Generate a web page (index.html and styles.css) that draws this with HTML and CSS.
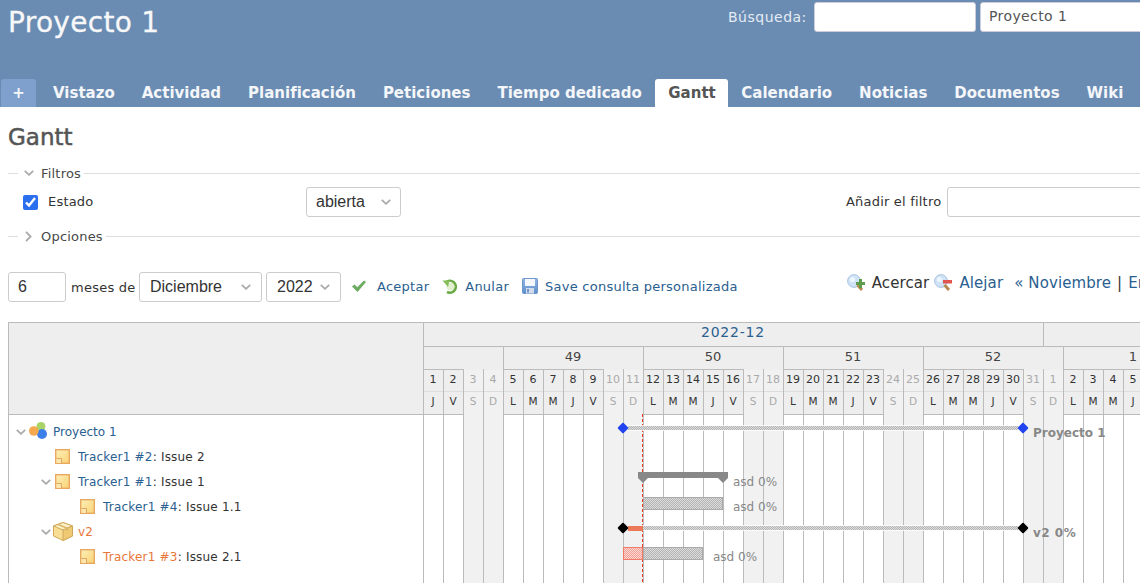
FILE: index.html
```html
<!DOCTYPE html>
<html lang="es">
<head>
	<meta charset="UTF-8">
	<title>Gantt - Proyecto 1</title>
	<link rel="stylesheet" href="styles.css">
</head>
<body>
<svg class="defs" width="0" height="0">
	<defs>
		<linearGradient id="g-ticket" x1="0" y1="0" x2="1" y2="1">
			<stop offset="0" stop-color="#fdf0b8"/>
			<stop offset="1" stop-color="#f9d276"/>
		</linearGradient>
		<linearGradient id="g-save" x1="0" y1="0" x2="0" y2="1">
			<stop offset="0" stop-color="#8fb6e4"/>
			<stop offset="1" stop-color="#5f8fcc"/>
		</linearGradient>
	</defs>
	<symbol id="i-down" viewBox="0 0 10 6"><path d="M.8.8 5 4.8 9.2.8" fill="none" stroke="#aaa" stroke-width="1.8"/></symbol>
	<symbol id="i-right" viewBox="0 0 7 11"><path d="M1 .8 5.6 5.5 1 10.2" fill="none" stroke="#aaa" stroke-width="1.8"/></symbol>
	<symbol id="i-project" viewBox="0 0 18 17">
		<circle cx="12" cy="4.500" r="4.500" fill="#a8d468"/>
		<circle cx="13" cy="12" r="5" fill="#3d7fe8"/>
		<circle cx="4.800" cy="9" r="4.800" fill="#f5a94e"/>
	</symbol>
	<symbol id="i-ticket" viewBox="0 0 15 15">
		<rect x=".7" y=".7" width="13.600" height="13.600" fill="url(#g-ticket)" stroke="#e8a860" stroke-width="1.400"/>
		<path d="M1.500 10H6V14H1.500Z" fill="#fbe7ae"/>
		<path d="M1.500 9.500H6.500V14" fill="none" stroke="#dca05a" stroke-width=".9"/>
	</symbol>
	<symbol id="i-box" viewBox="0 0 20 19">
		<path d="M10 .5 19.500 4V14L10 18.500.5 14V4Z" fill="#f7de94" stroke="#cfa85a"/>
		<path d="M.5 4 10 8 19.500 4 10 .5Z" fill="#fcf1c8" stroke="#cfa85a"/>
		<path d="M10 8V18.500L19.500 14V4Z" fill="#f0c973" stroke="#cfa85a"/>
		<path d="M5 2.500 14.500 6.200V9" fill="none" stroke="#d9b66a" stroke-width="1.500"/>
	</symbol>
	<symbol id="i-check" viewBox="0 0 16 14"><path d="M1 7.500 3.500 5.500 6.300 8.300 13 1.500 15 3 6.500 13Z" fill="#6cab60"/></symbol>
	<symbol id="i-undo" viewBox="0 0 16 16">
		<circle cx="8.500" cy="8.500" r="4" fill="#e2efcf"/>
		<path d="M3.500 4.500A6 6 0 1 1 5 14" fill="none" stroke="#6dab45" stroke-width="2.600"/>
		<path d="M.5 2.500 7.500 2.500 6 9Z" fill="#86bf58"/>
	</symbol>
	<symbol id="i-save" viewBox="0 0 16 16">
		<rect x=".5" y=".5" width="15" height="15" rx="1" fill="url(#g-save)" stroke="#6f97c9"/>
		<rect x="3" y="1" width="10" height="7" fill="#f4f7fb"/>
		<rect x="4" y="10" width="8" height="5.500" fill="#d3dcea"/>
		<rect x="5" y="11" width="2" height="3.500" fill="#6f97c9"/>
	</symbol>
	<symbol id="i-zoomin" viewBox="0 0 18 18">
		<circle cx="7" cy="7" r="6.400" fill="#cfe2f6" stroke="#a9c4e2"/>
		<circle cx="5.500" cy="5.500" r="2.600" fill="#eef6fd"/>
		<path d="M10.500 11 15 16" stroke="#b88a52" stroke-width="3"/>
		<path d="M9 8H12V5H15V8H18V11H15V14H12V11H9Z" fill="#5c9c4a"/>
	</symbol>
	<symbol id="i-zoomout" viewBox="0 0 18 18">
		<circle cx="7" cy="7" r="6.400" fill="#cfe2f6" stroke="#a9c4e2"/>
		<circle cx="5.500" cy="5.500" r="2.600" fill="#eef6fd"/>
		<path d="M10.500 11 15 16" stroke="#b88a52" stroke-width="3"/>
		<rect x="9" y="6" width="9" height="3.500" fill="#e0564e"/>
	</symbol>
</svg>

<div class="page">
	<header class="top">
		<div class="top-row">
			<h1>Proyecto 1</h1>
			<div class="quick">
				<label>Búsqueda:</label>
				<input class="quick-q" type="text">
				<div class="quick-jump">Proyecto 1</div>
			</div>
		</div>
		<nav class="tabs">
			<a class="tab plus">+</a>
			<a class="tab">Vistazo</a>
			<a class="tab">Actividad</a>
			<a class="tab">Planificación</a>
			<a class="tab">Peticiones</a>
			<a class="tab">Tiempo dedicado</a>
			<a class="tab active">Gantt</a>
			<a class="tab">Calendario</a>
			<a class="tab">Noticias</a>
			<a class="tab">Documentos</a>
			<a class="tab">Wiki</a>
		</nav>
	</header>

	<main class="content">
		<h2>Gantt</h2>

		<div class="legend filters-legend">
			<svg class="ico-down"><use href="#i-down"/></svg>
			<span>Filtros</span>
		</div>
		<div class="filter-row">
			<input class="check" type="checkbox" checked>
			<span class="filter-name">Estado</span>
			<div class="select sel-status"><span>abierta</span><svg class="ico-down"><use href="#i-down"/></svg></div>
			<span class="add-label">Añadir el filtro</span>
			<input class="add-input" type="text">
		</div>
		<div class="legend options-legend">
			<svg class="ico-right"><use href="#i-right"/></svg>
			<span>Opciones</span>
		</div>

		<div class="toolbar">
			<input class="months" type="text" value="6">
			<span class="months-label">meses de</span>
			<div class="select sel-month"><span>Diciembre</span><svg class="ico-down"><use href="#i-down"/></svg></div>
			<div class="select sel-year"><span>2022</span><svg class="ico-down"><use href="#i-down"/></svg></div>
			<a class="action act-ok"><svg class="ico-check"><use href="#i-check"/></svg>Aceptar</a>
			<a class="action act-undo"><svg class="ico-16"><use href="#i-undo"/></svg>Anular</a>
			<a class="action act-save"><svg class="ico-16"><use href="#i-save"/></svg>Save consulta personalizada</a>
			<div class="pager">
				<svg class="ico-18"><use href="#i-zoomin"/></svg>
				<span class="zoom-off">Acercar</span>
				<svg class="ico-18"><use href="#i-zoomout"/></svg>
				<a class="zoom-on">Alejar</a>
				<a class="prev">« Noviembre</a>
				<span class="sep">|</span>
				<a>Enero »</a>
			</div>
		</div>

		<section class="gantt">
			<div class="subjects">
				<div class="subjects-head"></div>
				<div class="row"><svg class="ico-down tree lvl0"><use href="#i-down"/></svg><svg class="ico-project"><use href="#i-project"/></svg><a>Proyecto 1</a></div>
				<div class="row lvl1"><svg class="ico-ticket"><use href="#i-ticket"/></svg><a>Tracker1 #2</a>: Issue 2</div>
				<div class="row"><svg class="ico-down tree lvl1b"><use href="#i-down"/></svg><svg class="ico-ticket"><use href="#i-ticket"/></svg><a>Tracker1 #1</a>: Issue 1</div>
				<div class="row lvl2"><svg class="ico-ticket"><use href="#i-ticket"/></svg><a>Tracker1 #4</a>: Issue 1.1</div>
				<div class="row"><svg class="ico-down tree lvl1b"><use href="#i-down"/></svg><svg class="ico-box"><use href="#i-box"/></svg><a class="late">v2</a></div>
				<div class="row lvl2"><svg class="ico-ticket"><use href="#i-ticket"/></svg><a class="late">Tracker1 #3</a>: Issue 2.1</div>
			</div>

			<div class="chart">
				<div class="months-row">
					<div class="month dec"><a>2022-12</a></div>
					<div class="month jan"></div>
				</div>
				<div class="weeks-row">
					<div class="week w0"></div>
					<div class="week w7">49</div>
					<div class="week w7">50</div>
					<div class="week w7">51</div>
					<div class="week w7">52</div>
					<div class="week w7">1</div>
				</div>
				<div class="days">
					<div class="day"><b>1</b><i>J</i></div>
					<div class="day"><b>2</b><i>V</i></div>
					<div class="day off"><b>3</b><i>S</i></div>
					<div class="day off"><b>4</b><i>D</i></div>
					<div class="day"><b>5</b><i>L</i></div>
					<div class="day"><b>6</b><i>M</i></div>
					<div class="day"><b>7</b><i>M</i></div>
					<div class="day"><b>8</b><i>J</i></div>
					<div class="day"><b>9</b><i>V</i></div>
					<div class="day off"><b>10</b><i>S</i></div>
					<div class="day off"><b>11</b><i>D</i></div>
					<div class="day"><b>12</b><i>L</i></div>
					<div class="day"><b>13</b><i>M</i></div>
					<div class="day"><b>14</b><i>M</i></div>
					<div class="day"><b>15</b><i>J</i></div>
					<div class="day"><b>16</b><i>V</i></div>
					<div class="day off"><b>17</b><i>S</i></div>
					<div class="day off"><b>18</b><i>D</i></div>
					<div class="day"><b>19</b><i>L</i></div>
					<div class="day"><b>20</b><i>M</i></div>
					<div class="day"><b>21</b><i>M</i></div>
					<div class="day"><b>22</b><i>J</i></div>
					<div class="day"><b>23</b><i>V</i></div>
					<div class="day off"><b>24</b><i>S</i></div>
					<div class="day off"><b>25</b><i>D</i></div>
					<div class="day"><b>26</b><i>L</i></div>
					<div class="day"><b>27</b><i>M</i></div>
					<div class="day"><b>28</b><i>M</i></div>
					<div class="day"><b>29</b><i>J</i></div>
					<div class="day"><b>30</b><i>V</i></div>
					<div class="day off"><b>31</b><i>S</i></div>
					<div class="day off"><b>1</b><i>D</i></div>
					<div class="day"><b>2</b><i>L</i></div>
					<div class="day"><b>3</b><i>M</i></div>
					<div class="day"><b>4</b><i>M</i></div>
					<div class="day"><b>5</b><i>J</i></div>
					<div class="day"><b>6</b><i>V</i></div>
				</div>

				<div class="today"></div>

				<div class="line line-project"></div>
				<div class="marker blue m-start-1"></div>
				<div class="marker blue m-end-1"></div>
				<span class="caption bold cap-project">Proyecto 1</span>

				<div class="parent"></div>
				<div class="parent-end pe-left"></div>
				<div class="parent-end pe-right"></div>
				<span class="caption cap-issue1">asd 0%</span>

				<div class="bar bar-issue4"></div>
				<span class="caption cap-issue4">asd 0%</span>

				<div class="line line-v2"></div>
				<div class="line-late"></div>
				<div class="marker black m-start-2"></div>
				<div class="marker black m-end-2"></div>
				<span class="caption bold cap-v2">v2 0%</span>

				<div class="bar-late"></div>
				<div class="bar bar-issue3"></div>
				<span class="caption cap-issue3">asd 0%</span>
			</div>
		</section>
	</main>
</div>
</body>
</html>
```

FILE: styles.css
```css
*{
	margin:0;
	padding:0;
	box-sizing:border-box;
}
html,body{
	width:100%;
	height:100%;
	overflow:hidden;
	background:#fff;
}
body{
	font-family:"DejaVu Sans",Verdana,sans-serif;
	font-size:12px;
	color:#333;
}
a{
	color:#2a6090;
}
.defs{
	position:absolute;
}
.page{
	width:1400px;
}

/* header */
.top{
	height:107px;
	background:#6a8cb3;
	display:flex;
	flex-direction:column;
}
.top-row{
	height:79px;
	display:flex;
	align-items:flex-start;
}
h1{
	width:728px;
	padding:5px 0 0 8px;
	font-size:28px;
	letter-spacing:.3px;
	line-height:36px;
	font-weight:normal;
	color:#f8f8f8;
	-webkit-text-stroke:.3px #f8f8f8;
}
.quick{
	display:flex;
	align-items:center;
	padding-top:2px;
	height:32px;
	font-size:14px;
	color:#e4ebf3;
}
.quick label{
	width:86px;
	letter-spacing:.5px;
}
.quick-q{
	width:162px;
	height:30px;
	border:1px solid #ccd;
	border-radius:3px;
	background:#fff;
}
.quick-jump{
	width:300px;
	height:30px;
	margin-left:4px;
	padding-left:8px;
	line-height:26px;
	background:#fff;
	border:1px solid #ccd;
	border-radius:3px;
	letter-spacing:.4px;
	color:#555;
}
.tabs{
	height:28px;
	display:flex;
	padding-left:1px;
	font-size:15px;
	font-weight:bold;
}
.tab{
	padding:0 13.500px;
	line-height:28px;
	color:#f4f6f9;
	border-radius:3px 3px 0 0;
	white-space:nowrap;
}
.tab.plus{
	width:35px;
	padding:0;
	text-align:center;
	background:#7f9fcd;
	margin-right:3.500px;
}
.tab.active{
	padding:0 12px 0 13px;
	background:#fff;
	color:#555;
}

/* content */
.content{
	padding:0 0 0 8px;
}
h2{
	height:58px;
	padding-top:14px;
	font-size:23px;
	line-height:32px;
	font-weight:normal;
	color:#555;
	-webkit-text-stroke:.5px #555;
}
.legend{
	height:16px;
	display:flex;
	align-items:center;
	font-size:13px;
	letter-spacing:.2px;
	color:#484848;
}
.legend::before{
	content:'';
	width:10px;
	height:1px;
	background:#ddd;
}
.legend::after{
	content:'';
	flex:1;
	height:1px;
	margin-left:3px;
	background:#ddd;
}
.ico-down{
	width:10px;
	height:6px;
	flex:none;
}
.ico-right{
	width:7px;
	height:11px;
	flex:none;
}
.filters-legend .ico-down{
	margin:0 7px 0 6px;
}
.options-legend .ico-right{
	margin:0 9px 0 7px;
}
.filter-row{
	height:47px;
	display:flex;
	align-items:center;
	padding-bottom:5px;
	font-size:13px;
	letter-spacing:.2px;
}
.check{
	width:15px;
	height:15px;
	margin-left:15px;
	accent-color:#2b6fef;
}
.filter-name{
	width:258px;
	margin-left:10px;
	margin-top:-2px;
}
.select{
	height:30px;
	display:flex;
	align-items:center;
	justify-content:space-between;
	border:1px solid #ccc;
	border-radius:3px;
	background:#fff;
	font-family:"Liberation Sans",Arial,sans-serif;
	font-size:16px;
	letter-spacing:0;
	color:#333;
	flex:none;
}
.sel-status{
	width:95px;
	padding:0 9px;
}
.add-label{
	width:96px;
	margin-left:445px;
	margin-top:-2px;
	white-space:nowrap;
}
.add-input{
	width:300px;
	height:30px;
	margin-left:5px;
	border:1px solid #ccc;
	border-radius:3px;
}
.toolbar{
	height:30px;
	margin-top:28px;
	display:flex;
	align-items:center;
	font-size:13px;
	letter-spacing:.25px;
	white-space:nowrap;
}
.months{
	width:58px;
	height:30px;
	padding-left:9px;
	border:1px solid #ccc;
	border-radius:3px;
	font-family:"Liberation Sans",Arial,sans-serif;
	font-size:16px;
	color:#333;
}
.months-label{
	width:64px;
	margin:0 4px 0 5px;
}
.sel-month{
	width:123px;
	padding:0 10px;
}
.sel-year{
	width:75px;
	margin-left:4px;
	padding:0 10px;
}
.action{
	display:flex;
	align-items:center;
	margin-top:-2px;
}
.ico-check{
	width:16px;
	height:14px;
	margin-right:10px;
}
.ico-16{
	width:16px;
	height:16px;
	margin-right:7px;
}
.act-ok{
	margin-left:10px;
}
.act-undo{
	margin-left:13px;
}
.act-save{
	margin-left:13px;
}
.pager{
	display:flex;
	align-items:center;
	margin-left:109px;
	margin-top:-8px;
	font-size:15px;
	letter-spacing:.1px;
}
.ico-18{
	width:18px;
	height:18px;
}
.zoom-off{
	margin:0 5px 0 7px;
}
.zoom-on{
	margin-left:7px;
}
.prev{
	margin-left:11px;
}
.sep{
	margin:0 6px;
}

/* gantt */
.gantt{
	margin-top:20px;
	display:flex;
	border-top:1px solid #bbb;
	height:300px;
}
.subjects{
	width:415px;
	flex:none;
	border-left:1px solid #bbb;
}
.subjects-head{
	height:92px;
	margin-bottom:4px;
	background:#eee;
	border-bottom:1px solid #bbb;
}
.row{
	height:25px;
	display:flex;
	align-items:center;
	white-space:pre;
	font-size:12px;
	letter-spacing:.2px;
	position:relative;
}
.row a{
	margin-left:6px;
}
.row .lvl0 ~ a{
	letter-spacing:0;
}
.lvl1{
	padding-left:46px;
}
.lvl2{
	padding-left:71px;
}
.row a.late{
	color:#e8763a;
}
.row .tree{
	margin-right:4px;
}
.row .lvl0{
	margin-left:7px;
	margin-right:3px;
}
.lvl1b{
	margin-left:32px;
}
.ico-project{
	width:18px;
	height:17px;
	margin-top:-2px;
}
.ico-ticket{
	width:15px;
	height:15px;
	margin-right:2px;
}
.ico-box{
	width:20px;
	height:19px;
	margin-left:-2px;
	margin-right:-1px;
}

.chart{
	position:relative;
	width:760px;
	flex:none;
	display:flex;
	flex-direction:column;
}
.months-row{
	height:24px;
	display:flex;
	background:#eee;
	border-bottom:1px solid #bbb;
}
.month{
	padding-right:1px;
	border-left:1px solid #bbb;
	text-align:center;
	font-size:14px;
	letter-spacing:.8px;
	line-height:19px;
	flex:none;
}
.month.dec{
	width:620px;
}
.month.jan{
	width:140px;
}
.weeks-row{
	height:22px;
	display:flex;
	background:#eee;
}
.week{
	padding-right:1px;
	border-left:1px solid #bbb;
	text-align:center;
	font-size:13px;
	line-height:20px;
	color:#444;
	flex:none;
}
.w0{
	width:80px;
}
.w7{
	width:140px;
}
.days{
	flex:1;
	display:flex;
}
.day{
	width:20px;
	flex:none;
	display:flex;
	flex-direction:column;
	border-left:1px solid #bbb;
}
.day b,.day i{
	display:block;
	padding-right:1px;
	text-align:center;
	font-style:normal;
	font-weight:normal;
	background:#eee;
	color:#333;
}
.day b{
	height:23px;
	line-height:20px;
	font-size:11px;
	border-top:1px solid #bbb;
	border-bottom:1px solid #ddd;
}
.day i{
	height:23px;
	line-height:18px;
	font-size:10.500px;
	border-bottom:1px solid #bbb;
}
.day.off{
	background:#f1f1f1;
}
.day.off b,.day.off i{
	color:#aaa;
	background:#f1f1f1;
	border-top-color:#eee;
}
.day.off i{
	border-bottom:0;
}

.today{
	position:absolute;
	left:219px;
	top:91px;
	bottom:0;
	border-left:1px dashed #f03a20;
}
.marker{
	position:absolute;
	width:8px;
	height:8px;
	border-radius:1px;
	transform:rotate(45deg);
}
.marker.blue{
	background:#2244ee;
}
.marker.black{
	background:#000;
}
.m-start-1{
	left:196px;
	top:101px;
}
.m-end-1{
	left:596px;
	top:101px;
}
.m-start-2{
	left:196px;
	top:201px;
}
.m-end-2{
	left:596px;
	top:201px;
}
.line,.bar{
	position:absolute;
	background:repeating-conic-gradient(#b4b4b4 0 25%,#dcdcdc 0 50%) 0 0/2px 2px;
}
.line{
	height:4px;
	outline:1px solid rgba(255,255,255,.8);
}
.line-project{
	left:205px;
	width:390px;
	top:103px;
}
.line-v2{
	left:220px;
	width:375px;
	top:203px;
}
.line-late{
	position:absolute;
	left:205px;
	width:15px;
	top:203px;
	height:5px;
	background:#ec7a58;
}
.bar{
	height:13px;
	border:1px solid #aaa;
}
.bar-issue4{
	left:220px;
	width:80px;
	top:174px;
}
.bar-issue3{
	left:220px;
	width:60px;
	top:224px;
}
.bar-late{
	position:absolute;
	left:200px;
	width:20px;
	top:224px;
	height:13px;
	border:1px solid #f07a68;
	background:repeating-conic-gradient(#f4a098 0 25%,#fcd8d2 0 50%) 0 0/2px 2px;
}
.parent{
	position:absolute;
	left:215px;
	width:90px;
	top:149px;
	height:6px;
	background:#888;
}
.parent-end{
	position:absolute;
	top:155px;
	width:0;
	height:0;
	border-left:5px solid transparent;
	border-right:5px solid transparent;
	border-top:5px solid #888;
}
.pe-left{
	left:215px;
}
.pe-right{
	left:295px;
}
.caption{
	position:absolute;
	font-size:12px;
	line-height:14px;
	color:#888;
	white-space:nowrap;
}
.caption.bold{
	font-weight:bold;
}
.cap-project{
	left:610px;
	top:103px;
}
.cap-issue1{
	left:310px;
	top:152px;
}
.cap-issue4{
	left:310px;
	top:177px;
}
.cap-v2{
	left:610px;
	top:203px;
	letter-spacing:.5px;
}
.cap-issue3{
	left:290px;
	top:227px;
}
```
